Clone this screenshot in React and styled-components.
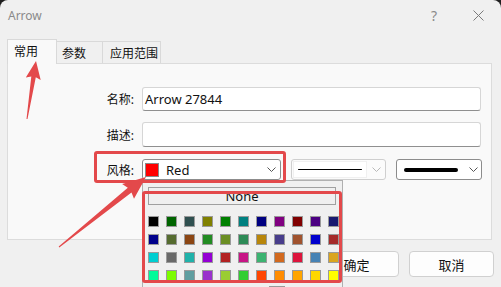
import React from 'react';
import styled, { createGlobalStyle } from 'styled-components';

const GlobalStyle = createGlobalStyle`
  html, body { margin: 0; padding: 0; background: #1f1f1f; }
  body { font-family: "Noto Sans", "Noto Sans CJK SC", sans-serif; color: #1a1a1a; }
  #root { width: 501px; height: 287px; overflow: hidden; }
`;

const Window = styled.div`
  position: relative;
  width: 501px;
  height: 287px;
  background: #f0f0f0;
  border-radius: 8px 8px 0 0;
  overflow: hidden;
  display: flex;
  flex-direction: column;
`;

const TitleBar = styled.div`
  height: 30px;
  flex: none;
  display: flex;
  align-items: center;
  justify-content: space-between;
  padding: 0 1px 0 8px;
`;

const Title = styled.div`
  font-size: 12px;
  color: #8a8a8a;
`;

const Controls = styled.div`
  display: flex;
  height: 30px;
`;

const CtrlBtn = styled.div`
  width: 44px;
  display: flex;
  align-items: center;
  justify-content: center;
  color: #8a8a8a;
  font-size: 14px;
`;

const TabStrip = styled.div`
  margin-top: 9px;
  height: 24px;
  display: flex;
  align-items: flex-end;
  padding-left: 7px;
  flex: none;
`;

const Tab = styled.div`
  position: relative;
  box-sizing: border-box;
  width: ${p => p.$w}px;
  height: ${p => (p.$active ? 25 : 22)}px;
  margin-bottom: ${p => (p.$active ? -1 : 0)}px;
  margin-left: ${p => (p.$first ? 0 : -1)}px;
  z-index: ${p => (p.$active ? 2 : 1)};
  background: ${p => (p.$active ? '#f9f9f9' : '#f0f0f0')};
  border: 1px solid #d9d9d9;
  border-bottom: none;
  font-size: 12px;
  padding-left: ${p => p.$pl}px;
  padding-top: 2px;
  color: #111;
`;

const Panel = styled.div`
  position: relative;
  box-sizing: border-box;
  height: 177px;
  margin: 0 9px 0 7px;
  border: 1px solid #dcdcdc;
  background: #f9f9f9;
  padding: 23px 10px 0 0;
  display: flex;
  flex-direction: column;
  flex: none;
`;

const Row = styled.div`
  display: flex;
  align-items: center;
  gap: 8px;
  height: ${p => p.$h}px;
  margin-top: ${p => p.$mt || 0}px;
`;

const Label = styled.div`
  width: 126px;
  flex: none;
  text-align: right;
  font-size: 12px;
  color: #111;
`;

const TextInput = styled.div`
  flex: 1;
  align-self: stretch;
  box-sizing: border-box;
  background: #fff;
  border: 1px solid #d6d6d6;
  border-bottom-color: #8f8f8f;
  border-radius: 3px;
  font-size: 13px;
  display: flex;
  align-items: center;
  padding-left: 2px;
  color: #111;
`;

const Combos = styled.div`
  display: flex;
  gap: 10px;
  align-self: stretch;
`;

const Combo = styled.div`
  box-sizing: border-box;
  width: ${p => p.$w}px;
  background: ${p => (p.$disabled ? '#fbfbfb' : '#fff')};
  border: 1px solid ${p => (p.$disabled ? '#cfcfcf' : '#8c8c8c')};
  border-radius: 3px;
  display: flex;
  align-items: center;
  padding: ${p => p.$pad};
`;

const ColorSwatch = styled.div`
  box-sizing: border-box;
  width: ${p => p.$s}px;
  height: ${p => p.$s}px;
  background: ${p => p.$c};
  border: 1px solid ${p => p.$b || '#9a9a9a'};
  flex: none;
`;

const ComboText = styled.div`
  flex: 1;
  font-size: 13px;
  margin-left: 7px;
  color: #111;
`;

const LineField = styled.div`
  width: 74px;
  height: 17px;
  background: #fff;
  border: 1px solid #f0f0f0;
  display: flex;
  align-items: center;
  padding: 0 4px;
  box-sizing: border-box;
`;

const Stroke = styled.div`
  height: ${p => p.$t}px;
  width: ${p => p.$w}px;
  background: #000;
  border-radius: ${p => p.$t / 2}px;
`;

const ChevronBox = styled.div`
  margin-left: auto;
  display: flex;
  align-items: center;
`;

const Buttons = styled.div`
  margin-top: 11px;
  display: flex;
  justify-content: flex-end;
  gap: 10px;
  padding-right: 7px;
`;

const Button = styled.div`
  box-sizing: border-box;
  width: 85px;
  height: 26px;
  background: #fdfdfd;
  border: 1px solid #d0d0d0;
  border-radius: 4px;
  display: flex;
  align-items: center;
  justify-content: center;
  font-size: 13px;
  color: #111;
`;

const Popup = styled.div`
  position: absolute;
  left: 142px;
  top: 180px;
  width: 201px;
  height: 115px;
  box-sizing: border-box;
  background: #f0f0f0;
  border: 1px solid #b0b0b0;
  z-index: 5;
  padding: 6px 0 0 4px;
`;

const NoneButton = styled.div`
  box-sizing: border-box;
  width: 188px;
  height: 18px;
  margin-left: 1px;
  border: 1px solid #a0a0a0;
  background: #f0f0f0;
  display: flex;
  align-items: center;
  justify-content: center;
  font-size: 13px;
  color: #111;
`;

const Grid = styled.div`
  margin-top: 11px;
  display: grid;
  grid-template-columns: repeat(11, 11px);
  grid-auto-rows: 11px;
  column-gap: 7px;
  row-gap: 7px;
  margin-left: 1px;
`;

const BottomNub = styled.div`
  margin: 5px 0 0 122px;
  width: 14px;
  height: 6px;
  border: 1px solid #9a9a9a;
  border-bottom: none;
  background: #e8e8e8;
`;

const Highlight = styled.div`
  position: absolute;
  box-sizing: border-box;
  left: ${p => p.$x}px;
  top: ${p => p.$y}px;
  width: ${p => p.$w}px;
  height: ${p => p.$h}px;
  border: 3px solid #e3494b;
  border-radius: 3px;
  z-index: 6;
  pointer-events: none;
`;

const ArrowLayer = styled.svg`
  position: absolute;
  left: 0;
  top: 0;
  z-index: 7;
  pointer-events: none;
`;

const Chevron = ({ color = '#555' }) => (
  <svg width="9" height="5" viewBox="0 0 9 5">
    <path d="M0.5 0.5 L4.5 4.5 L8.5 0.5" fill="none" stroke={color} strokeWidth="1" />
  </svg>
);

const CloseIcon = () => (
  <svg width="11" height="11" viewBox="0 0 11 11">
    <path d="M0.5 0.5 L10.5 10.5 M10.5 0.5 L0.5 10.5" stroke="#7a7a7a" strokeWidth="1" fill="none" />
  </svg>
);

function arrowPoints(T, P, h, w, s, back = 2, tailW = 0.5) {
  const dx = P[0] - T[0];
  const dy = P[1] - T[1];
  const L = Math.hypot(dx, dy);
  const u = [dx / L, dy / L];
  const n = [-u[1], u[0]];
  const B = [P[0] - u[0] * h, P[1] - u[1] * h];
  const Bb = [B[0] - u[0] * back, B[1] - u[1] * back];
  const pts = [
    [T[0] + n[0] * tailW, T[1] + n[1] * tailW],
    [B[0] + n[0] * s, B[1] + n[1] * s],
    [Bb[0] + n[0] * w, Bb[1] + n[1] * w],
    P,
    [Bb[0] - n[0] * w, Bb[1] - n[1] * w],
    [B[0] - n[0] * s, B[1] - n[1] * s],
    [T[0] - n[0] * tailW, T[1] - n[1] * tailW],
  ];
  return pts.map(p => p[0].toFixed(1) + ',' + p[1].toFixed(1)).join(' ');
}

const COLORS = [
  '#000000', '#006400', '#2F4F4F', '#808000', '#008000', '#008080', '#000080', '#800080', '#800000', '#4B0082', '#191970',
  '#00008B', '#556B2F', '#8B4513', '#228B22', '#6B8E23', '#2E8B57', '#B8860B', '#483D8B', '#A0522D', '#0000CD', '#A52A2A',
  '#00CED1', '#696969', '#20B2AA', '#9400D3', '#B22222', '#C71585', '#3CB371', '#D2691E', '#DC143C', '#4682B4', '#DAA520',
  '#00FA9A', '#7CFC00', '#5F9EA0', '#9932CC', '#9ACD32', '#32CD32', '#FF4500', '#FF8C00', '#FFA500', '#FFD700', '#FFFF00',
];

export default function App() {
  return (
    <>
      <GlobalStyle />
      <Window>
        <TitleBar>
          <Title>Arrow</Title>
          <Controls>
            <CtrlBtn>?</CtrlBtn>
            <CtrlBtn><CloseIcon /></CtrlBtn>
          </Controls>
        </TitleBar>

        <TabStrip>
          <Tab $active $first $w={50} $pl={6}>常用</Tab>
          <Tab $w={47} $pl={5}>参数</Tab>
          <Tab $w={59} $pl={7}>应用范围</Tab>
        </TabStrip>

        <Panel>
          <Row $h={24}>
            <Label>名称:</Label>
            <TextInput>Arrow 27844</TextInput>
          </Row>
          <Row $h={25} $mt={11}>
            <Label>描述:</Label>
            <TextInput />
          </Row>
          <Row $h={21} $mt={12}>
            <Label>风格:</Label>
            <Combos>
              <Combo $w={139} $pad="0 4px 0 2px">
                <ColorSwatch $s={14} $c="#ff0000" $b="#8a8a8a" />
                <ComboText>Red</ComboText>
                <Chevron />
              </Combo>
              <Combo $w={95} $disabled $pad="0 4px 0 1px">
                <LineField>
                  <Stroke $t={1} $w={65} />
                </LineField>
                <ChevronBox><Chevron color="#b8b8b8" /></ChevronBox>
              </Combo>
              <Combo $w={86} $pad="0 3px 0 7px">
                <Stroke $t={4} $w={54} />
                <ChevronBox><Chevron /></ChevronBox>
              </Combo>
            </Combos>
          </Row>
        </Panel>

        <Buttons>
          <Button>确定</Button>
          <Button>取消</Button>
        </Buttons>

        <Popup>
          <NoneButton>None</NoneButton>
          <Grid>
            {COLORS.map((c, i) => (
              <ColorSwatch key={i} $s={11} $c={c} />
            ))}
          </Grid>
          <BottomNub />
        </Popup>

        <Highlight $x={94} $y={151} $w={192} $h={32} />
        <Highlight $x={142} $y={191} $w={200} $h={92} />

        <ArrowLayer width="501" height="287" viewBox="0 0 501 287">
          <polygon points={arrowPoints([27, 119], [36, 61], 16, 7.5, 2.3)} fill="#e3494b" />
          <polygon points={arrowPoints([59, 247], [146, 177], 21, 9.5, 3)} fill="#e3494b" />
        </ArrowLayer>
      </Window>
    </>
  );
}
